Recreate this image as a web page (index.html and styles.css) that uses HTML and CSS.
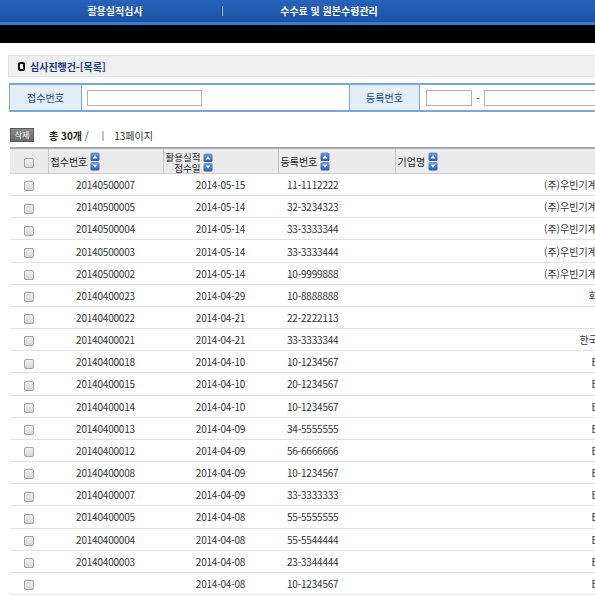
FILE: index.html
```html
<!DOCTYPE html>
<html lang="ko">
<head>
<meta charset="utf-8">
<link rel="stylesheet" href="styles.css">
</head>
<body>
<div class="page">
  <header class="nav">
    <div class="nav-item">활용실적심사</div>
    <div class="nav-sep"></div>
    <div class="nav-item">수수료 및 원본수령관리</div>
  </header>
  <div class="blackbar"></div>

  <div class="titlebar"><span class="bullet"></span><span class="title">심사진행건-[목록]</span></div>

  <div class="search">
    <div class="s-label s-label1">접수번호</div>
    <div class="s-field s-field1"><span class="inp inp-w1"></span></div>
    <div class="s-label s-label2">등록번호</div>
    <div class="s-field s-field2"><span class="inp inp-w2"></span><span class="dash">-</span><span class="inp inp-w3"></span></div>
  </div>

  <div class="toolbar">
    <span class="btn-del">삭제</span>
    <span class="total"><b>총 30개</b> /</span>
    <span class="bar">|</span>
    <span class="pages">13페이지</span>
  </div>

  <table class="list">
    <colgroup>
      <col class="c-chk"><col class="c-no"><col class="c-date"><col class="c-reg"><col class="c-co">
    </colgroup>
    <thead>
      <tr>
        <th class="th-chk"><span class="cb"></span></th>
        <th class="th-l"><span class="hd"><span class="hd-t">접수번호</span><svg class="sort" viewBox="0 0 10 19"><defs><linearGradient id="g1" x1="0" y1="0" x2="0" y2="1"><stop offset="0" stop-color="#6d9ae0"/><stop offset="1" stop-color="#2a58ab"/></linearGradient></defs><rect x="0.5" y="0.5" width="9" height="8.5" rx="1.6" fill="url(#g1)"/><rect x="0.5" y="10" width="9" height="8.5" rx="1.6" fill="url(#g1)"/><path d="M2.6 6.4 L5 3.2 L7.4 6.4 Z" fill="#fff"/><path d="M2.6 12.6 L5 15.8 L7.4 12.6 Z" fill="#fff"/></svg></span></th>
        <th class="th-l"><span class="hd"><span class="hd-t hd-2">활용실적<br>접수일</span><svg class="sort" viewBox="0 0 10 19"><rect x="0.5" y="0.5" width="9" height="8.5" rx="1.6" fill="url(#g1)"/><rect x="0.5" y="10" width="9" height="8.5" rx="1.6" fill="url(#g1)"/><path d="M2.6 6.4 L5 3.2 L7.4 6.4 Z" fill="#fff"/><path d="M2.6 12.6 L5 15.8 L7.4 12.6 Z" fill="#fff"/></svg></span></th>
        <th class="th-l"><span class="hd"><span class="hd-t">등록번호</span><svg class="sort" viewBox="0 0 10 19"><rect x="0.5" y="0.5" width="9" height="8.5" rx="1.6" fill="url(#g1)"/><rect x="0.5" y="10" width="9" height="8.5" rx="1.6" fill="url(#g1)"/><path d="M2.6 6.4 L5 3.2 L7.4 6.4 Z" fill="#fff"/><path d="M2.6 12.6 L5 15.8 L7.4 12.6 Z" fill="#fff"/></svg></span></th>
        <th class="th-l"><span class="hd"><span class="hd-t">기업명</span><svg class="sort" viewBox="0 0 10 19"><rect x="0.5" y="0.5" width="9" height="8.5" rx="1.6" fill="url(#g1)"/><rect x="0.5" y="10" width="9" height="8.5" rx="1.6" fill="url(#g1)"/><path d="M2.6 6.4 L5 3.2 L7.4 6.4 Z" fill="#fff"/><path d="M2.6 12.6 L5 15.8 L7.4 12.6 Z" fill="#fff"/></svg></span></th>
      </tr>
    </thead>
    <tbody>
      <tr><td><span class="cb"></span></td><td>20140500007</td><td>2014-05-15</td><td class="reg">11-1112222</td><td class="co">(주)우빈기계설비엔지니어</td></tr>
      <tr><td><span class="cb"></span></td><td>20140500005</td><td>2014-05-14</td><td class="reg">32-3234323</td><td class="co">(주)우빈기계설비엔지니어</td></tr>
      <tr><td><span class="cb"></span></td><td>20140500004</td><td>2014-05-14</td><td class="reg">33-3333344</td><td class="co">(주)우빈기계설비엔지니어</td></tr>
      <tr><td><span class="cb"></span></td><td>20140500003</td><td>2014-05-14</td><td class="reg">33-3333444</td><td class="co">(주)우빈기계설비엔지니어</td></tr>
      <tr><td><span class="cb"></span></td><td>20140500002</td><td>2014-05-14</td><td class="reg">10-9999888</td><td class="co">(주)우빈기계설비엔지니어</td></tr>
      <tr><td><span class="cb"></span></td><td>20140400023</td><td>2014-04-29</td><td class="reg">10-8888888</td><td class="co">화성</td></tr>
      <tr><td><span class="cb"></span></td><td>20140400022</td><td>2014-04-21</td><td class="reg">22-2222113</td><td class="co"></td></tr>
      <tr><td><span class="cb"></span></td><td>20140400021</td><td>2014-04-21</td><td class="reg">33-3333344</td><td class="co">한국정밀</td></tr>
      <tr><td><span class="cb"></span></td><td>20140400018</td><td>2014-04-10</td><td class="reg">10-1234567</td><td class="co">EG</td></tr>
      <tr><td><span class="cb"></span></td><td>20140400015</td><td>2014-04-10</td><td class="reg">20-1234567</td><td class="co">EG</td></tr>
      <tr><td><span class="cb"></span></td><td>20140400014</td><td>2014-04-10</td><td class="reg">10-1234567</td><td class="co">EG</td></tr>
      <tr><td><span class="cb"></span></td><td>20140400013</td><td>2014-04-09</td><td class="reg">34-5555555</td><td class="co">EG</td></tr>
      <tr><td><span class="cb"></span></td><td>20140400012</td><td>2014-04-09</td><td class="reg">56-6666666</td><td class="co">EG</td></tr>
      <tr><td><span class="cb"></span></td><td>20140400008</td><td>2014-04-09</td><td class="reg">10-1234567</td><td class="co">EG</td></tr>
      <tr><td><span class="cb"></span></td><td>20140400007</td><td>2014-04-09</td><td class="reg">33-3333333</td><td class="co">EG</td></tr>
      <tr><td><span class="cb"></span></td><td>20140400005</td><td>2014-04-08</td><td class="reg">55-5555555</td><td class="co">EG</td></tr>
      <tr><td><span class="cb"></span></td><td>20140400004</td><td>2014-04-08</td><td class="reg">55-5544444</td><td class="co">EG</td></tr>
      <tr><td><span class="cb"></span></td><td>20140400003</td><td>2014-04-08</td><td class="reg">23-3344444</td><td class="co">EG</td></tr>
      <tr><td><span class="cb"></span></td><td></td><td>2014-04-08</td><td class="reg">10-1234567</td><td class="co">EG</td></tr>
    </tbody>
  </table>
</div>
</body>
</html>
```

FILE: styles.css
```css
html, body {
  margin: 0;
  padding: 0;
  overflow: hidden;
  background: #fff;
}
body {
  font-family: "Noto Sans CJK KR", "Noto Sans", sans-serif;
  font-size: 10px;
  color: #333;
}
.page {
  width: 820px;
}
.nav {
  display: flex;
  align-items: center;
  height: 22px;
  padding-left: 15px;
  background: linear-gradient(#2763b8, #1a52a4);
  border-bottom: 3px solid #3d7bd0;
}
.nav-item {
  width: 200px;
  text-align: center;
  color: #fff;
  font-weight: bold;
  font-size: 10px;
  line-height: 22px;
}
.nav-sep {
  width: 1px;
  height: 10px;
  margin: 0 6px;
  background: #a9c6ee;
  border-left: 1px solid #0f3c80;
}
.blackbar {
  height: 18px;
  background: #000;
}
.titlebar {
  margin: 12px 0 0 8px;
  height: 20px;
  background: #efefef;
  border: 1px solid #e2e2e2;
  display: flex;
  align-items: center;
  padding-left: 9px;
}
.bullet {
  width: 3px;
  height: 5px;
  border: 2px solid #111;
  border-radius: 2px;
  background: #fff;
  margin-right: 5px;
}
.title {
  color: #1f3d7e;
  font-weight: bold;
  font-size: 10px;
}
.search {
  margin: 6px 0 0 9px;
  height: 25px;
  display: flex;
  border-top: 2px solid #7ba6dd;
  border-bottom: 2px solid #7ba6dd;
  border-left: 1px solid #7ba6dd;
}
.s-label {
  background: #e3eefb;
  color: #2b4a80;
  display: flex;
  align-items: center;
  justify-content: center;
  font-size: 10px;
}
.s-label1 { width: 71px; border-right: 1px solid #7ba6dd; }
.s-label2 { width: 69px; border-left: 1px solid #7ba6dd; border-right: 1px solid #7ba6dd; }
.s-field {
  display: flex;
  align-items: center;
  background: #fff;
}
.s-field1 { width: 267px; padding-left: 5px; box-sizing: border-box; }
.s-field2 { padding-left: 6px; }
.inp {
  display: block;
  height: 14px;
  border: 1px solid #b3b3b3;
  background: #fff;
}
.inp-w1 { width: 113px; }
.inp-w2 { width: 44px; }
.inp-w3 { width: 160px; }
.dash {
  width: 12px;
  text-align: center;
  color: #333;
}
.toolbar {
  margin: 16px 0 0 10px;
  height: 14px;
  display: flex;
  align-items: center;
}
.btn-del {
  width: 22px;
  height: 12px;
  line-height: 12px;
  text-align: center;
  background: linear-gradient(#8a8a8a, #6a6a6a);
  border: 1px solid #5a5a5a;
  color: #fff;
  font-size: 8px;
  margin-right: 15px;
}
.total b {
  color: #222;
}
.bar {
  margin-left: 13px;
  margin-right: 10px;
  color: #333;
  font-size: 9px;
}
.pages {
  color: #333;
}
.list {
  margin: 5px 0 0 10px;
  border-collapse: collapse;
  table-layout: fixed;
  width: 791px;
}
.c-chk { width: 38px; }
.c-no { width: 115px; }
.c-date { width: 115px; }
.c-reg { width: 117px; }
.c-co { width: 406px; }
.list thead tr {
  background: #ebebeb;
  border-top: 2px solid #a9a9a9;
  border-bottom: 1px solid #cfcfcf;
  height: 24px;
}
.list th {
  font-weight: normal;
  color: #222;
  padding: 0;
  border-left: 1px solid #c9c9c9;
  vertical-align: middle;
}
.list th.th-chk {
  border-left: 0;
  text-align: center;
}
.th-l {
  text-align: left;
  padding-left: 2px !important;
}
.hd {
  display: inline-flex;
  align-items: center;
}
.hd-t {
  font-size: 10px;
  line-height: 11px;
  margin-right: 3px;
}
.hd-2 {
  text-align: right;
  font-size: 9.5px;
  line-height: 10.5px;
}
.sort {
  width: 10px;
  height: 19px;
  display: block;
}
.list tbody tr {
  height: 22.17px;
  border-bottom: 1px solid #e1e1e1;
}
.list td {
  padding: 0;
  text-align: center;
  vertical-align: middle;
  white-space: nowrap;
  overflow: hidden;
  color: #333;
  letter-spacing: -0.2px;
}
.list td.reg {
  text-align: left;
  padding-left: 9px;
}
.list td.co {
  text-align: center;
  letter-spacing: 0;
}
.cb {
  display: inline-block;
  width: 8px;
  height: 8px;
  border: 1px solid #a3a3a3;
  border-radius: 2px;
  background: linear-gradient(#f2f2f2, #d6d6d6);
  vertical-align: middle;
}
```
